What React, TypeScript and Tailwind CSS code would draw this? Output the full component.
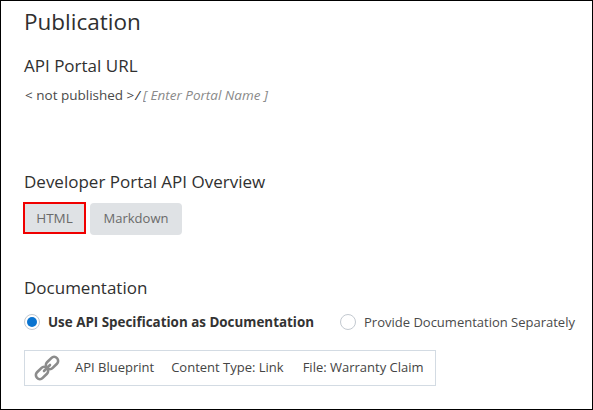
import React from "react";

function LinkIcon() {
  return (
    <svg width="26" height="26" viewBox="0 0 26 26" fill="none" stroke="#8c8c8c" strokeWidth="2.6" strokeLinecap="round" strokeLinejoin="round">
      <rect x="-7" y="-4" width="14" height="8" rx="4" transform="translate(18 8) rotate(-45)" />
      <rect x="-7" y="-4" width="14" height="8" rx="4" transform="translate(8 18) rotate(-45)" />
      <path d="M10 16 L16 10" />
    </svg>
  );
}

export default function App() {
  return (
    <div className="w-[593px] h-[410px] border border-black bg-white pl-[23px] overflow-hidden font-['Open_Sans',sans-serif] text-[#303030]">
      <h1 className="text-[22.5px] leading-[30px] mt-[6px] text-[#2f2f2f]">Publication</h1>
      <h2 className="text-[17px] leading-[24px] mt-[17px]">API Portal URL</h2>
      <div className="text-[13.5px] leading-[18px] mt-[8px] flex">
        <span className="text-[#4a4a4a] ml-[1px]">&lt; not published &gt;</span>
        <span className="italic ml-[1px]">/</span>
        <span className="italic text-[#8a8a8a] ml-[3px] w-[126px] overflow-hidden whitespace-nowrap">[ Enter Portal Name ]</span>
      </div>
      <h2 className="text-[17px] leading-[24px] mt-[66px]">Developer Portal API Overview</h2>
      <div className="flex gap-1 mt-[8px] ml-[-1px] text-[13px] text-[#6a6a6a]">
        <button className="h-[32px] w-[63px] bg-[#dfe2e5] border-2 border-[#f00000] text-[13.5px]">HTML</button>
        <button className="h-[32px] w-[92px] mt-[1px] bg-[#dfe2e5] rounded-sm">Markdown</button>
      </div>
      <h2 className="text-[17px] leading-[24px] mt-[41px]">Documentation</h2>
      <div className="flex items-center mt-[13px] text-[13px] leading-[18px]">
        <span className="w-[16px] h-[16px] rounded-full border border-[#c3c9d0] flex items-center justify-center">
          <span className="w-[10px] h-[10px] rounded-full bg-[#0a74d0]" />
        </span>
        <span className="font-bold text-[13.4px] ml-[8px] text-[#333333] whitespace-nowrap">Use API Specification as Documentation</span>
        <span className="w-[16px] h-[16px] rounded-full border border-[#c3c9d0] ml-[26px]" />
        <span className="ml-[8px] text-[#4a4a4a] whitespace-nowrap">Provide Documentation Separately</span>
      </div>
      <div className="flex items-center mt-[19px] w-[412px] h-[36px] border border-[#d3dbe3] text-[13px] text-[#444444]">
        <span className="ml-[9px] flex"><LinkIcon /></span>
        <span className="ml-[15px]">API Blueprint</span>
        <span className="ml-[17px]">Content Type: Link</span>
        <span className="ml-[19px]">File: Warranty Claim</span>
      </div>
    </div>
  );
}
